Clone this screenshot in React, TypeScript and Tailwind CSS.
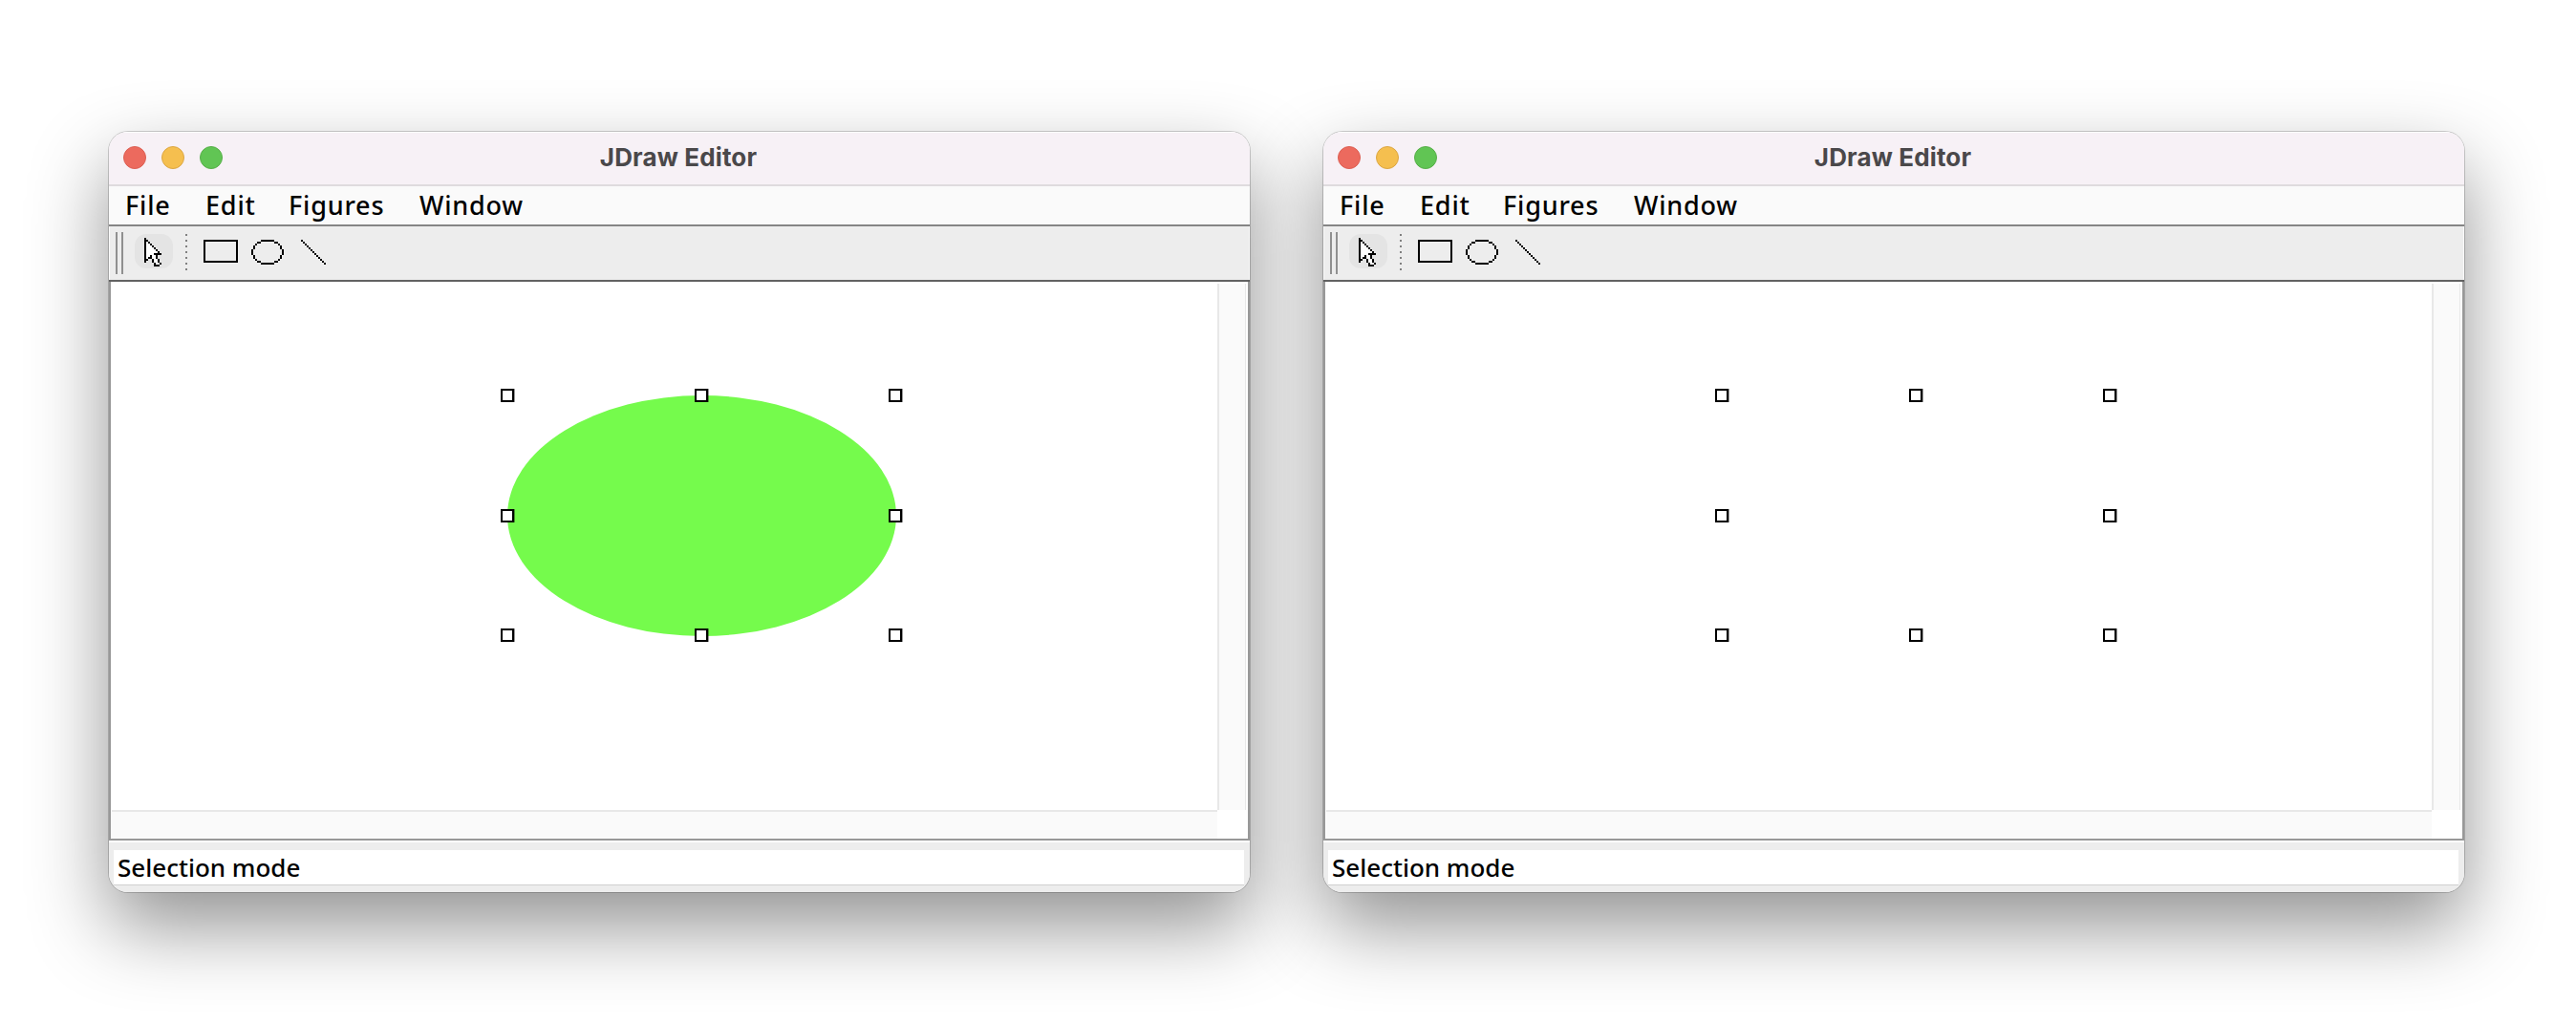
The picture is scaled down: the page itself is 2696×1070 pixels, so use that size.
const HANDLES = [
  "left-[408px] top-[112px]",
  "left-[611px] top-[112px]",
  "left-[814px] top-[112px]",
  "left-[408px] top-[238px]",
  "left-[814px] top-[238px]",
  "left-[408px] top-[363px]",
  "left-[611px] top-[363px]",
  "left-[814px] top-[363px]",
];

const CURSOR = [
  "X",
  "XX",
  "X.X",
  "X..X",
  "X...X",
  "X....X",
  "X.....X",
  "X......X",
  "X....XXXX",
  "X..X..X",
  "X.XX..X",
  "XX  X..X",
  "X   X..X",
  "     X..X",
  "     XXX",
];

const OVAL = [
  "     XXXXXXX",
  "   XX       XX",
  "  X           X",
  " X             X",
  " X             X",
  "X               X",
  "X               X",
  "X               X",
  " X             X",
  " X             X",
  "  X           X",
  "   XX       XX",
  "     XXXXXXX",
];

const LINE = Array.from({ length: 13 }, (_, i) => " ".repeat(i) + "X");

function Pixels({ rows, className }: { rows: string[]; className: string }) {
  const width = Math.max(...rows.map((r) => r.length));
  return (
    <svg className={className} viewBox={`0 0 ${width} ${rows.length}`} shapeRendering="crispEdges">
      {rows.flatMap((row, y) =>
        [...row].map((c, x) =>
          c === " " ? null : (
            <rect key={`${x}-${y}`} x={x} y={y} width="1" height="1" fill={c === "X" ? "#000" : "#fff"} />
          )
        )
      )}
    </svg>
  );
}

function Toolbar() {
  return (
    <div className="flex h-[58px] shrink-0 items-start border-b-2 border-[#626262] bg-[#ededed] shadow-[inset_1px_0_#fafafa,inset_-1px_0_#fafafa]">
      <div className="ml-[7px] mt-[6px] h-11 w-2 border-x-2 border-[#909090]" />
      <div className="ml-3 mt-2 h-9 w-10 rounded-xl bg-[#e4e4e4] pl-[10px] pt-1">
        <Pixels rows={CURSOR} className="h-[30px] w-[18px]" />
      </div>
      <div className="ml-[13px] mt-2 flex flex-col gap-1">
        {Array.from({ length: 7 }, (_, i) => (
          <i key={i} className="size-0.5 bg-[#808080]" />
        ))}
      </div>
      <div className="ml-[17px] mt-[14px] h-6 w-9 border-2 border-black" />
      <Pixels rows={OVAL} className="ml-[14px] mt-[14px] h-[26px] w-[34px]" />
      <Pixels rows={LINE} className="ml-[18px] mt-[14px] h-[26px] w-[26px]" />
    </div>
  );
}

function Canvas({ filled }: { filled: boolean }) {
  return (
    <div className="relative flex h-[585px] shrink-0 flex-col border-x-2 border-b-2 border-[#989898] bg-white">
      <div className="flex h-[553px] justify-end pr-0.5 pt-0.5">
        <div className="h-full w-[30px] border-l-2 border-r border-[#e8e8e8] bg-[#fafafa]" />
      </div>
      <div className="ml-px h-[30px] w-[1157px] border-t-2 border-[#e8e8e8] bg-[#fafafa]" />
      {filled && (
        <svg className="absolute left-[415px] top-[119px] h-[252px] w-[407px]" viewBox="0 0 407 252">
          <ellipse cx="203.5" cy="126" rx="203.5" ry="126" fill="#75fb4c" />
        </svg>
      )}
      {HANDLES.map((place) => (
        <i
          key={place}
          className={`absolute size-[14px] border-2 border-black bg-white shadow-[1px_0_rgba(0,0,0,0.4)] ${place}`}
        />
      ))}
    </div>
  );
}

function EditorWindow({ filled }: { filled: boolean }) {
  return (
    <section className="h-[796px] w-[1194px] rounded-[20px] shadow-[0_0_0_1px_rgba(0,0,0,0.18),0_36px_82px_rgba(0,0,0,0.43)]">
      <div className="relative z-10 flex h-full flex-col overflow-hidden rounded-[20px] bg-[#ededed]">
        <header className="relative flex h-[55px] shrink-0 items-start bg-[#f7f1f6] pl-[15px] pt-[15px] shadow-[inset_0_1px_#fff]">
          <div className="flex gap-4">
            <i className="size-6 rounded-full border border-[#dc5f53] bg-[#ec6a5e]" />
            <i className="size-6 rounded-full border border-[#dba643] bg-[#f5bf4f]" />
            <i className="size-6 rounded-full border border-[#57ae49] bg-[#61c554]" />
          </div>
          <h1 className="absolute inset-x-0 top-0 pr-0.5 text-center font-['Inter',sans-serif] text-[26px] font-bold leading-[53px] tracking-[0.15px] text-[#4a484a]">
            JDraw Editor
          </h1>
        </header>
        <nav className="flex h-11 shrink-0 border-y-2 border-b-[#858585] border-t-[#dfdbde] bg-[#fafafa] pl-[17px] font-['Noto_Sans',sans-serif] text-[27px] font-medium leading-10 tracking-[0.8px] text-black">
          <span className="w-[84px]">File</span>
          <span className="w-[87px]">Edit</span>
          <span className="w-[137px]">Figures</span>
          <span>Window</span>
        </nav>
        <Toolbar />
        <Canvas filled={filled} />
        <footer className="h-[54px] border-t-2 border-white pl-[5px] pr-[6px] pt-2">
          <div className="h-[37px] border-b border-[#d0d0d0] bg-white pl-1 font-['Noto_Sans',sans-serif] text-[26px] font-medium leading-9 text-black">
            Selection mode
          </div>
        </footer>
      </div>
    </section>
  );
}

export default function App() {
  return (
    <main className="flex h-[1070px] w-[2696px] gap-[77px] overflow-hidden bg-white pl-[114px] pt-[138px]">
      <EditorWindow filled />
      <EditorWindow filled={false} />
    </main>
  );
}
